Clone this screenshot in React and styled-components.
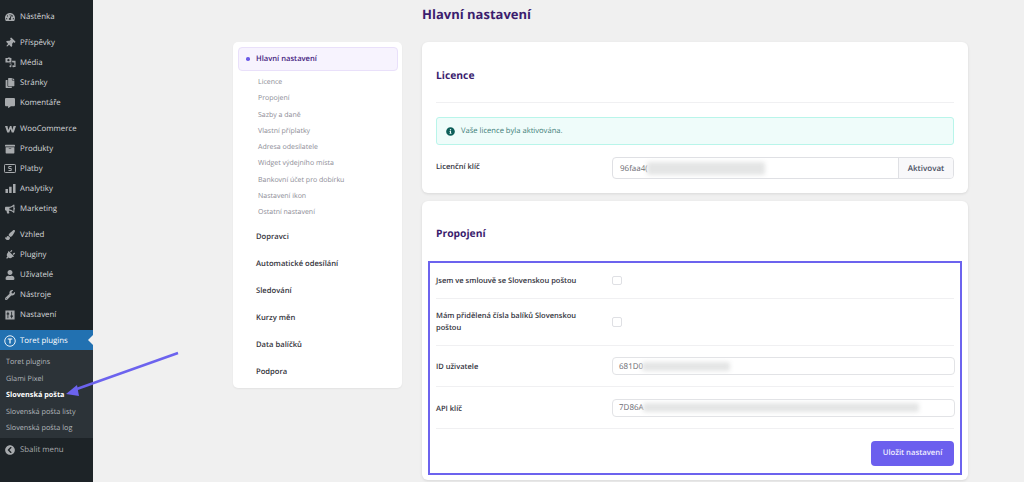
import React from 'react';
import styled, { createGlobalStyle } from 'styled-components';
import { FaThumbtack, FaCopy, FaCommentAlt, FaBullhorn, FaPaintBrush, FaPlug, FaUser, FaWrench, FaTachometerAlt, FaArchive, FaChevronCircleLeft, FaInfoCircle } from 'react-icons/fa';

const Global = createGlobalStyle`
  html, body { margin: 0; padding: 0; background: #f0f0f0; }
  * { box-sizing: border-box; }
  #root { width: 1024px; height: 482px; overflow: hidden; }
`;
const Page = styled.div`
  position: relative; display: flex; width: 1024px; height: 482px; overflow: hidden;
  font-family: "Open Sans", "Noto Sans", sans-serif; background: #f0f0f0; text-rendering: geometricPrecision;
`;
const Sidebar = styled.nav`
  width: 92.5px; flex: none; background: #1d2327; padding-top: 6px; display: flex; flex-direction: column;
`;
const Group = styled.div`
  display: flex; flex-direction: column; margin-bottom: 6px;
`;
const MenuRow = styled.div`
  position: relative; height: 20px; display: flex; align-items: center; padding: 1.500px 0 0 5px; gap: 5px;
  font-size: 7.85px; color: ${p => p.$active ? '#fff' : '#d5d8da'};
  background: ${p => p.$active ? '#2271b1' : 'transparent'};
  svg { flex: none; color: ${p => p.$active ? '#fff' : '#a7aaad'}; }
  ${p => p.$active && `&::after { content: ''; position: absolute; right: 0; top: 5px; border: 5px solid transparent; border-right-color: #f0f0f0; border-left: 0; }`}
`;
const IconSlot = styled.span`
  width: 10px; height: 10px; flex: none; display: flex; align-items: center; justify-content: center;
  svg { transform: ${p => p.$tilt ? 'rotate(45deg)' : 'none'}; }
`;
const Sub = styled.div`
  background: #2c3338; padding: 3.800px 0 0; height: 88px; display: flex; flex-direction: column;
`;
const SubRow = styled.div`
  height: 16.5px; display: flex; align-items: center; padding-left: 6px; font-size: 7.25px;
  color: ${p => p.$current ? '#fff' : '#b4b9be'}; font-weight: ${p => p.$current ? 700 : 400};
`;
const Collapse = styled(MenuRow)`
  color: #a7aaad; margin-top: 1px;
`;
const Main = styled.main`
  flex: 1; padding-left: 140.5px; display: grid; grid-template-columns: 169px 546px; column-gap: 20px; align-content: start;
`;
const Title = styled.h1`
  grid-column: 2; margin: 5px 0 0; height: 37px; font-size: 13px; line-height: 18px; font-weight: 700; color: #3b1d6e;
`;
const Nav = styled.aside`
  background: #fff; border-radius: 5px; padding: 5px 4.5px 4px 5px; height: 346px; box-shadow: 0 1px 2px rgba(0,0,0,.06);
`;
const NavActive = styled.div`
  height: 24px; display: flex; align-items: center; gap: 6.5px; padding-left: 7px; border-radius: 4px;
  background: #f7f3fe; border: 1px solid #e9e0fa; font-size: 7.6px; font-weight: 600; color: #45227e;
`;
const Dot = styled.span`
  width: 3.5px; height: 3.5px; border-radius: 50%; background: #6c5ce7;
`;
const NavSubs = styled.div`
  display: flex; flex-direction: column; padding: 3.500px 0 3px 20px;
`;
const NavSub = styled.div`
  height: 16.25px; display: flex; align-items: center; font-size: 7px; color: #8c8c96;
`;
const NavItem = styled.div`
  height: 26.9px; display: flex; align-items: center; padding-left: 18px; font-size: 7.65px; font-weight: 600; color: #34343c;
`;
const Column = styled.div`
  display: flex; flex-direction: column; gap: 8px;
`;
const Card = styled.section`
  background: #fff; border-radius: 6px; padding: 0 14px; box-shadow: 0 1px 3px rgba(0,0,0,.1);
  height: ${p => p.$h}px;
`;
const CardTitle = styled.h2`
  margin: 0; height: ${p => p.$h}px; padding-top: ${p => p.$top}px; display: flex; align-items: center; font-size: 10.3px; font-weight: 700; color: #3b1d6e;
  border-bottom: ${p => p.$line ? '1px solid #f0f0f2' : '0'};
`;
const Alert = styled.div`
  margin-top: 14px; height: 28px; display: flex; align-items: center; gap: 6px; padding-left: 9px; border-radius: 3px;
  background: #effcfa; border: 1px solid #b9f5ea; color: #3d7d78; font-size: 7.6px;
  svg { color: #0e5f5a; }
`;
const KeyRow = styled.div`
  margin-top: 12px; display: grid; grid-template-columns: 176px 1fr; align-items: center;
`;
const Label = styled.label`
  font-size: 7.5px; font-weight: 600; line-height: 12px; color: #33333d; max-width: 152px;
  padding-top: ${p => p.$shift ? 2 : 0}px; margin-bottom: ${p => p.$lift ? 2 : 0}px;
`;
const InputGroup = styled.div`
  height: 22px; display: flex; border: 1px solid #dfe0e4; border-radius: 4px; overflow: hidden; background: #fff;
`;
const FieldBody = styled.div`
  flex: 1; display: flex; align-items: center; padding-left: ${p => p.$pad || 6}px; font-size: 8px; color: #6a6a72; overflow: hidden;
`;
const Blur = styled.span`
  height: ${p => p.$tall ? 13 : 9}px; width: ${p => p.$w}px; margin-left: -1px; background: #e4e5e5; filter: blur(2px); border-radius: 2px;
`;
const AddOn = styled.div`
  width: 55px; flex: none; display: flex; align-items: center; justify-content: center; background: #f8f8fa; border-left: 1px solid #dfe0e4;
  font-size: 8px; font-weight: 600; color: #4b5064;
`;
const Highlight = styled.div`
  margin: 0 -8px; padding: 0 6px; height: 214px; border: 2px solid #6c63ee;
`;
const Row = styled.div`
  height: ${p => p.$h}px; display: grid; grid-template-columns: 176px 1fr; align-items: center; border-bottom: 1px solid #f0f0f2;
`;
const Check = styled.span`
  width: 9.5px; height: 9.5px; border: 1px solid #dfe0e4; border-radius: 2px; background: #fff;
`;
const Field = styled.div`
  height: 18px; margin-right: -1px; display: flex; border: 1px solid #e2e3e6; border-radius: 4px; background: #fff; overflow: hidden;
`;
const Actions = styled.div`
  display: flex; justify-content: flex-end; padding-top: 11.5px;
`;
const Save = styled.button`
  width: 83px; height: 25px; border: 0; border-radius: 4px; background: #6c5fee; color: #f1efff; font: 600 7.7px "Open Sans", sans-serif; text-rendering: geometricPrecision;
`;
const Arrow = styled.svg`
  position: absolute; left: 0; top: 0; pointer-events: none;
`;

const WooIcon = () => (
  <svg width="11" height="8" viewBox="0 0 22 16"><path fill="currentColor" d="M0 2h5l1.500 8L10 2h3l1.500 8L17 2h5l-4.500 13h-4L11 8l-2.500 7h-4z" /></svg>
);
const PayIcon = () => (
  <svg width="12" height="9" viewBox="0 0 24 18"><rect x="1" y="1" width="22" height="16" rx="1.500" fill="none" stroke="currentColor" strokeWidth="2" /><path fill="none" stroke="currentColor" strokeWidth="2" d="M15 5H9.500v4h5v4H9" /></svg>
);
const ToretIcon = () => (
  <svg width="12" height="12" viewBox="0 0 24 24"><circle cx="12" cy="12" r="10.500" fill="none" stroke="currentColor" strokeWidth="1.800" /><path fill="none" stroke="currentColor" strokeWidth="2.400" d="M7.500 8h9M12 8v9" /></svg>
);
const MediaIcon = () => (
  <svg width="11" height="11" viewBox="0 0 24 24"><path fill="currentColor" fillRule="evenodd" d="M1 2h5l1-1h4l1 1h2v10H1zM7.500 4.500a2.500 2.500 0 100 5 2.500 2.500 0 000-5z" /><path fill="currentColor" d="M15 8h8v14h-3.500a2.200 2.200 0 11.800-2.600V12h-4zM10 15v-1h4v6a2.200 2.200 0 11-1.500-2v-3z" /></svg>
);
const BarsIcon = () => (
  <svg width="11" height="11" viewBox="0 0 24 24"><path fill="currentColor" d="M1 13h5.500v9H1zM9 8h5.500v14H9zM17.500 2H23v20h-5.500z" /></svg>
);
const SettingsIcon = () => (
  <svg width="10" height="10" viewBox="0 0 24 24"><path fill="currentColor" fillRule="evenodd" d="M1 1h22v22H1zM6 4v4H4v3h2v9h2v-9h2V8H8V4zM15 4v9h-2v3h2v4h2v-4h2v-3h-2V4z" /></svg>
);

const menu = [
  [[FaTachometerAlt, 'Nástěnka']],
  [[FaThumbtack, 'Příspěvky', true], [MediaIcon, 'Média'], [FaCopy, 'Stránky'], [FaCommentAlt, 'Komentáře']],
  [[WooIcon, 'WooCommerce'], [FaArchive, 'Produkty'], [PayIcon, 'Platby'], [BarsIcon, 'Analytiky'], [FaBullhorn, 'Marketing']],
  [[FaPaintBrush, 'Vzhled'], [FaPlug, 'Pluginy', true], [FaUser, 'Uživatelé'], [FaWrench, 'Nástroje'], [SettingsIcon, 'Nastavení']],
];
const subs = ['Toret plugins', 'Glami Pixel', 'Slovenská pošta', 'Slovenská pošta listy', 'Slovenská pošta log'];
const navSubs = ['Licence', 'Propojení', 'Sazby a daně', 'Vlastní příplatky', 'Adresa odesílatele', 'Widget výdejního místa', 'Bankovní účet pro dobírku', 'Nastavení ikon', 'Ostatní nastavení'];
const navItems = ['Dopravci', 'Automatické odesílání', 'Sledování', 'Kurzy měn', 'Data balíčků', 'Podpora'];

export default function App() {
  return (
    <Page>
      <Global />
      <Sidebar>
        {menu.map((group, i) => (
          <Group key={i}>
            {group.map(([Icon, label, tilt]) => (
              <MenuRow key={label}>
                <IconSlot $tilt={tilt}><Icon size={10} /></IconSlot>
                {label}
              </MenuRow>
            ))}
          </Group>
        ))}
        <MenuRow $active>
          <IconSlot><ToretIcon /></IconSlot>
          Toret plugins
        </MenuRow>
        <Sub>
          {subs.map(s => <SubRow key={s} $current={s === 'Slovenská pošta'}>{s}</SubRow>)}
        </Sub>
        <Collapse>
          <IconSlot><FaChevronCircleLeft size={10} /></IconSlot>
          Sbalit menu
        </Collapse>
      </Sidebar>
      <Main>
        <Title>Hlavní nastavení</Title>
        <Nav>
          <NavActive><Dot />Hlavní nastavení</NavActive>
          <NavSubs>{navSubs.map(s => <NavSub key={s}>{s}</NavSub>)}</NavSubs>
          {navItems.map(s => <NavItem key={s}>{s}</NavItem>)}
        </Nav>
        <Column>
          <Card $h={151}>
            <CardTitle $h={61} $top={8} $line>Licence</CardTitle>
            <Alert><FaInfoCircle size={9} />Vaše licence byla aktivována.</Alert>
            <KeyRow>
              <Label $lift>Licenční klíč</Label>
              <InputGroup>
                <FieldBody $pad={7}>96faa4(<Blur $tall $w={118} /></FieldBody>
                <AddOn>Aktivovat</AddOn>
              </InputGroup>
            </KeyRow>
          </Card>
          <Card $h={279}>
            <CardTitle $h={60} $top={6}>Propojení</CardTitle>
            <Highlight>
              <Row $h={36}><Label>Jsem ve smlouvě se Slovenskou poštou</Label><Check /></Row>
              <Row $h={47}><Label>Mám přidělená čísla balíků Slovenskou poštou</Label><Check /></Row>
              <Row $h={41}><Label $shift>ID uživatele</Label><Field><FieldBody>681D0<Blur $w={88} /></FieldBody></Field></Row>
              <Row $h={42}><Label $shift>API klíč</Label><Field><FieldBody>7D86A<Blur $w={276} /></FieldBody></Field></Row>
              <Actions><Save>Uložit nastavení</Save></Actions>
            </Highlight>
          </Card>
        </Column>
      </Main>
      <Arrow width="1024" height="482" viewBox="0 0 1024 482">
        <path d="M178 353 L74 390" stroke="#6c63ee" strokeWidth="2.400" fill="none" />
        <path d="M66 394 L77 385 L79 396 Z" fill="#6c63ee" />
      </Arrow>
    </Page>
  );
}
